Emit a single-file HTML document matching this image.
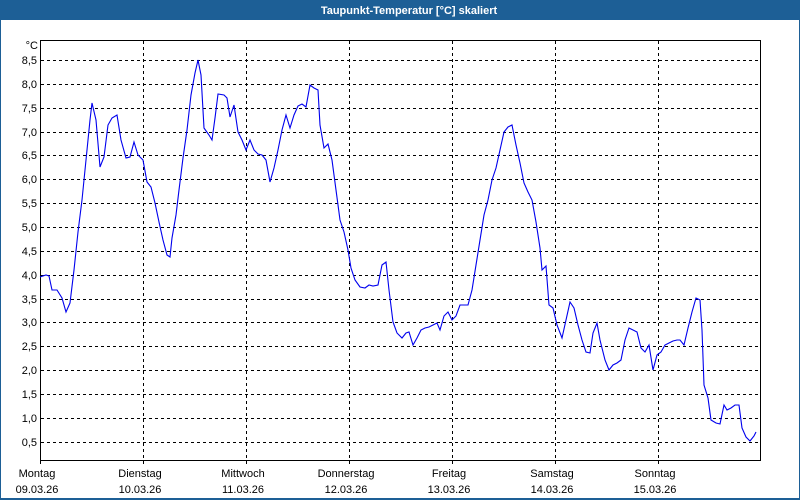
<!DOCTYPE html>
<html><head><meta charset="utf-8"><style>
html,body{margin:0;padding:0;width:800px;height:500px;overflow:hidden;background:#fff;font-family:"Liberation Sans","DejaVu Sans",sans-serif}
</style></head><body>
<svg width="800" height="500" xmlns="http://www.w3.org/2000/svg" style="display:block">
<rect x="0" y="0" width="800" height="500" fill="#1d5f96"/>
<rect x="1" y="20" width="798" height="478" fill="#fff"/>
<text x="409" y="14" fill="#fff" font-size="11" font-weight="bold" text-anchor="middle" font-family="Liberation Sans, sans-serif">Taupunkt-Temperatur [°C] skaliert</text>
<g stroke="#000" stroke-width="1" stroke-dasharray="3,3" shape-rendering="crispEdges">
<line x1="41" y1="60.5" x2="760" y2="60.5"/><line x1="41" y1="84.5" x2="760" y2="84.5"/><line x1="41" y1="108.5" x2="760" y2="108.5"/><line x1="41" y1="132.5" x2="760" y2="132.5"/><line x1="41" y1="155.5" x2="760" y2="155.5"/><line x1="41" y1="179.5" x2="760" y2="179.5"/><line x1="41" y1="203.5" x2="760" y2="203.5"/><line x1="41" y1="227.5" x2="760" y2="227.5"/><line x1="41" y1="251.5" x2="760" y2="251.5"/><line x1="41" y1="275.5" x2="760" y2="275.5"/><line x1="41" y1="299.5" x2="760" y2="299.5"/><line x1="41" y1="322.5" x2="760" y2="322.5"/><line x1="41" y1="346.5" x2="760" y2="346.5"/><line x1="41" y1="370.5" x2="760" y2="370.5"/><line x1="41" y1="394.5" x2="760" y2="394.5"/><line x1="41" y1="418.5" x2="760" y2="418.5"/><line x1="41" y1="442.5" x2="760" y2="442.5"/>
<line x1="143.5" y1="41" x2="143.5" y2="464"/><line x1="246.5" y1="41" x2="246.5" y2="464"/><line x1="349.5" y1="41" x2="349.5" y2="464"/><line x1="452.5" y1="41" x2="452.5" y2="464"/><line x1="555.5" y1="41" x2="555.5" y2="464"/><line x1="658.5" y1="41" x2="658.5" y2="464"/>
</g>
<rect x="40.5" y="40.5" width="720" height="420" fill="none" stroke="#000" stroke-width="1" shape-rendering="crispEdges"/>
<line x1="40.5" y1="461" x2="40.5" y2="464" stroke="#000"/>
<polyline fill="none" stroke="#0000ee" stroke-width="1.1" points="40,277 46,275 49,276 52,290 57,290 62,298 66,312 70,303 74,270 78,232 82,200 86,160 90,120 92,103 96,120 100,167 104,157 108,125 112,118 117,115 121,140 126,158 130,157 134,142 138,155 143,160 147,182 151,187 155,203 159,222 163,240 167,255 170,257 172,238 176,215 179,190 183,158 187,130 191,95 195,73 198,60 201,75 204,128 209,135 212,140 215,118 218,94 224,95 227,98 230,117 234,105 238,132 242,140 246,150 250,140 254,150 258,154 262,155 266,160 270,182 274,168 278,150 282,130 286,115 290,128 294,115 298,106 302,104 306,107 310,85 314,88 318,90 320,125 324,148 328,144 332,160 336,190 340,220 344,232 348,250 351,268 355,280 360,287 365,288 369,285 373,286 378,285 382,265 386,262 389,290 393,322 397,333 402,338 406,333 409,332 413,345 417,338 421,330 425,328 429,327 433,325 437,323 440,330 444,316 448,312 452,320 456,316 460,305 464,305 468,305 472,290 476,265 480,240 484,215 488,200 492,180 496,168 500,150 504,132 508,127 512,125 516,145 520,163 524,183 528,192 532,200 536,222 540,248 542,270 546,266 549,305 553,308 557,325 562,338 566,320 570,302 574,308 578,325 582,340 586,352 590,353 593,333 597,323 600,340 605,360 609,370 613,365 617,363 621,360 625,340 629,328 633,330 637,332 641,348 645,352 649,345 653,370 657,355 661,352 665,345 669,343 673,341 677,340 680,340 684,345 688,328 692,312 696,298 700,300 702,330 704,385 708,398 711,420 716,423 720,424 724,405 727,410 731,408 735,405 739,405 742,428 746,437 750,441 754,436 756,432"/>
<g font-size="11" fill="#000" text-anchor="end" font-family="Liberation Sans, sans-serif">
<text x="38" y="49">°C</text>
<text x="37" y="64">8,5</text><text x="37" y="88">8,0</text><text x="37" y="112">7,5</text><text x="37" y="136">7,0</text><text x="37" y="159">6,5</text><text x="37" y="183">6,0</text><text x="37" y="207">5,5</text><text x="37" y="231">5,0</text><text x="37" y="255">4,5</text><text x="37" y="279">4,0</text><text x="37" y="303">3,5</text><text x="37" y="326">3,0</text><text x="37" y="350">2,5</text><text x="37" y="374">2,0</text><text x="37" y="398">1,5</text><text x="37" y="422">1,0</text><text x="37" y="446">0,5</text>
</g>
<g font-size="11" fill="#000" text-anchor="middle" font-family="Liberation Sans, sans-serif">
<text x="37" y="477">Montag</text><text x="37" y="493">09.03.26</text>
<text x="140" y="477">Dienstag</text><text x="140" y="493">10.03.26</text>
<text x="243" y="477">Mittwoch</text><text x="243" y="493">11.03.26</text>
<text x="346" y="477">Donnerstag</text><text x="346" y="493">12.03.26</text>
<text x="449" y="477">Freitag</text><text x="449" y="493">13.03.26</text>
<text x="552" y="477">Samstag</text><text x="552" y="493">14.03.26</text>
<text x="655" y="477">Sonntag</text><text x="655" y="493">15.03.26</text>
</g>
</svg>
</body></html>
